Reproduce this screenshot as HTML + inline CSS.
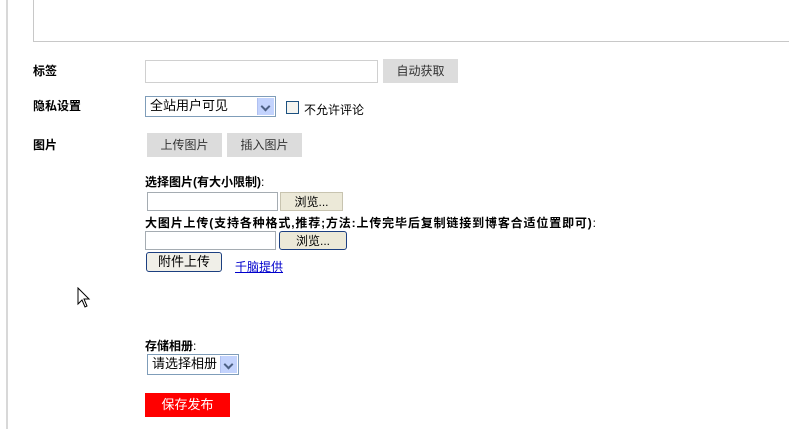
<!DOCTYPE html>
<html><head><meta charset="utf-8"><style>
body{margin:0;width:789px;height:429px;background:#fff;position:relative;overflow:hidden;font-family:"Liberation Sans","WenQuanYi Zen Hei","Noto Sans CJK SC",sans-serif;font-size:12px;color:#000}
.a{position:absolute}
.b{font-weight:bold}
.gbtn{position:absolute;background:#dcdcdc;color:#333;text-align:center;line-height:24px;height:24px}
.inp{position:absolute;border:1px solid #d0d0d0;background:#fff;box-sizing:border-box}
.sel{position:absolute;border:1px solid #7f9db9;box-sizing:border-box;background:#fff;font-size:13px}
.arr{position:absolute;right:1px;top:1px;bottom:1px;width:16px;background:#c3d3fd;border-left:1px solid #b0c0f0}
.arr:after{content:"";position:absolute;left:4px;top:5px;width:5px;height:5px;border-right:2px solid #4d6185;border-bottom:2px solid #4d6185;transform:rotate(45deg)}
.f{position:absolute;border:1px solid #a5acb2;box-sizing:border-box;background:#fff}
.br{position:absolute;background:#ece9d8;border:1px solid #c8c4b0;box-sizing:border-box;text-align:center;line-height:18px}
</style></head><body>
<div class="a" style="left:6px;top:0;width:2px;height:429px;background:#d8d8d8"></div>
<div class="a" style="left:33px;top:-2px;width:770px;height:44px;border:1px solid #c8c8c8;box-sizing:border-box"></div>

<div class="a b" style="left:33px;top:62px">标签</div>
<div class="inp" style="left:145px;top:60px;width:233px;height:23px"></div>
<div class="gbtn" style="left:383px;top:59px;width:75px">自动获取</div>

<div class="a b" style="left:33px;top:97px">隐私设置</div>
<div class="sel" style="left:145px;top:96px;width:131px;height:21px;line-height:18px;padding-left:4px">全站用户可见<div class="arr"></div></div>
<div class="a" style="left:286px;top:101px;width:11px;height:11px;border:1px solid #1c5180;background:#f4f4f0"></div>
<div class="a" style="left:304px;top:101px">不允许评论</div>

<div class="a b" style="left:33px;top:136px">图片</div>
<div class="gbtn" style="left:147px;top:133px;width:75px">上传图片</div>
<div class="gbtn" style="left:227px;top:133px;width:75px">插入图片</div>

<div class="a b" style="left:145px;top:173px">选择图片(有大小限制)<span style="font-weight:normal">:</span></div>
<div class="f" style="left:147px;top:192px;width:131px;height:19px"></div>
<div class="br" style="left:280px;top:192px;width:63px;height:19px">浏览...</div>

<div class="a b" style="left:145px;top:214px;letter-spacing:0.85px">大图片上传(支持各种格式,推荐;方法:上传完毕后复制链接到博客合适位置即可)<span style="font-weight:normal">:</span></div>
<div class="f" style="left:145px;top:231px;width:131px;height:19px"></div>
<div class="br" style="left:279px;top:231px;width:68px;height:19px;border:1px solid #1c3f80;border-radius:3px;background:#ece9d8">浏览...</div>
<div class="br" style="left:146px;top:252px;width:76px;height:20px;border:1px solid #1c3f80;border-radius:3px;background:#f0efe8;font-size:13px">附件上传</div>
<div class="a" style="left:235px;top:258px;color:#00c;text-decoration:underline">千脑提供</div>

<svg class="a" style="left:77px;top:287px" width="14" height="22" viewBox="0 0 14 22"><path d="M1 1 L1 17 L5 13 L8 20 L10 19 L7 12 L12 12 Z" fill="#fff" stroke="#000" stroke-width="1"/></svg>

<div class="a b" style="left:145px;top:337px">存储相册<span style="font-weight:normal">:</span></div>
<div class="sel" style="left:147px;top:354px;width:92px;height:21px;line-height:18px;padding-left:4px">请选择相册<div class="arr"></div></div>

<div class="a" style="left:145px;top:393px;width:85px;height:24px;background:#f00;color:#fff;text-align:center;line-height:24px;font-size:13px">保存发布</div>
</body></html>
